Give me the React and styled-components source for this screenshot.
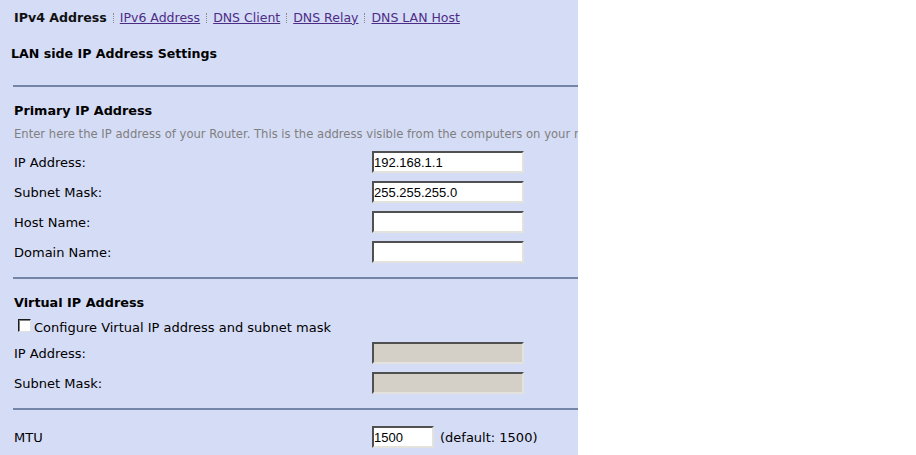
import React from 'react'
import styled, { createGlobalStyle } from 'styled-components'

const GlobalStyle = createGlobalStyle`
  html, body {
    margin: 0;
    padding: 0;
    background: #ffffff;
  }
  body {
    font-family: "DejaVu Sans", Verdana, sans-serif;
  }
`

const Page = styled.div`
  display: flex;
  width: 916px;
  height: 455px;
  overflow: hidden;
`

const Panel = styled.div`
  width: 578px;
  height: 455px;
  overflow: hidden;
  background: #d5dcf6;
  color: #000;
  white-space: nowrap;
`

const Tabs = styled.div`
  display: flex;
  align-items: center;
  height: 20px;
  margin: 7px 0 0 14px;
`

const ActiveTab = styled.span`
  font-size: 12.6px;
  font-weight: bold;
  color: #111;
`

const TabLink = styled.a`
  font-size: 12.5px;
  color: #4d2c86;
  text-decoration: underline;
  cursor: pointer;
`

const Sep = styled.span`
  display: inline-block;
  height: 10px;
  margin: 2px 6px 0;
  border-left: 1px dotted #8a8a8a;
`

const PageTitle = styled.div`
  font-size: 12.6px;
  font-weight: bold;
  margin: 19px 0 0 11px;
`

const Rule = styled.div`
  height: 2px;
  margin: ${({ $top }) => $top}px 0 0 13px;
  background: #7486a8;
`

const Section = styled.div`
  padding-left: 14px;
`

const SectionTitle = styled.div`
  font-size: 12.8px;
  font-weight: bold;
  height: 16px;
  margin-top: ${({ $top }) => $top}px;
`

const Hint = styled.div`
  font-size: 11.6px;
  color: #808080;
  margin: 8px 0 6px;
`

const Row = styled.div`
  display: grid;
  grid-template-columns: 358px auto auto;
  align-items: center;
  height: 30px;
  margin-top: ${({ $top }) => $top || 0}px;
`

const Label = styled.span`
  font-size: 13px;
`

const Field = styled.input`
  box-sizing: border-box;
  width: ${({ $w }) => $w || 152}px;
  height: 22px;
  margin: 0;
  padding: 1px 1px 0 0;
  border: 2px solid;
  border-color: #505050 #e4e2dc #e4e2dc #505050;
  background: ${({ disabled }) => (disabled ? '#d4d0c8' : '#ffffff')};
  font-family: "Liberation Sans", Arial, sans-serif;
  font-size: 13px;
  color: #000;
  outline: none;
`

const Note = styled.span`
  font-size: 13px;
  margin-left: 6px;
`

const CheckRow = styled.label`
  display: flex;
  align-items: center;
  height: 22px;
  margin: 5px 0 0 4px;
  font-size: 13px;
`

const Box = styled.span`
  box-sizing: border-box;
  width: 13px;
  height: 13px;
  margin: 0 3px 3px 0;
  border: 1px solid #1c1c1c;
  border-right-color: #e0e0e0;
  border-bottom-color: #e0e0e0;
  background: #ffffff;
  box-shadow: inset 1px 1px 0 #808080;
`

const primary = [
  { label: 'IP Address:', value: '192.168.1.1' },
  { label: 'Subnet Mask:', value: '255.255.255.0' },
  { label: 'Host Name:', value: '' },
  { label: 'Domain Name:', value: '' },
]

const App = () => {
  return (
    <>
      <GlobalStyle />
      <Page>
        <Panel>
          <Tabs>
            <ActiveTab>IPv4 Address</ActiveTab>
            <Sep />
            <TabLink>IPv6 Address</TabLink>
            <Sep />
            <TabLink>DNS Client</TabLink>
            <Sep />
            <TabLink>DNS Relay</TabLink>
            <Sep />
            <TabLink>DNS LAN Host</TabLink>
          </Tabs>
          <PageTitle>LAN side IP Address Settings</PageTitle>
          <Rule $top={24} />

          <Section>
            <SectionTitle $top={16}>Primary IP Address</SectionTitle>
            <Hint>
              Enter here the IP address of your Router. This is the address visible from the computers on your network.
            </Hint>
            {primary.map((row) => (
              <Row key={row.label}>
                <Label>{row.label}</Label>
                <Field defaultValue={row.value} />
              </Row>
            ))}
          </Section>
          <Rule $top={10} />

          <Section>
            <SectionTitle $top={16}>Virtual IP Address</SectionTitle>
            <CheckRow>
              <Box />
              Configure Virtual IP address and subnet mask
            </CheckRow>
            <Row>
              <Label>IP Address:</Label>
              <Field disabled />
            </Row>
            <Row>
              <Label>Subnet Mask:</Label>
              <Field disabled />
            </Row>
          </Section>
          <Rule $top={10} />

          <Section>
            <Row $top={12}>
              <Label>MTU</Label>
              <div>
                <Field $w={62} defaultValue="1500" />
                <Note>(default: 1500)</Note>
              </div>
            </Row>
          </Section>
        </Panel>
      </Page>
    </>
  )
}

export default App
